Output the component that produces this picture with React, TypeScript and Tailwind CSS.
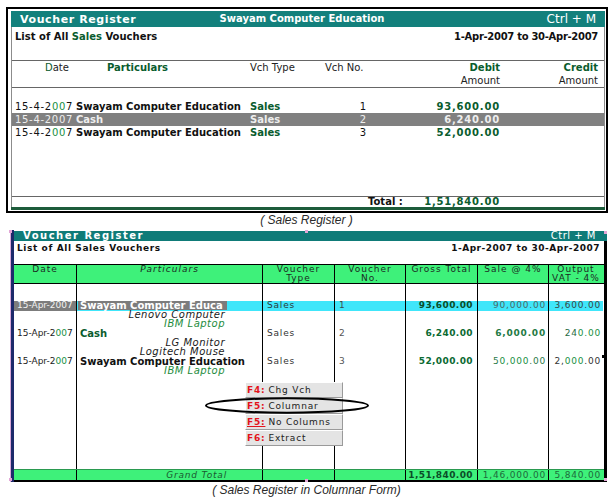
import type { ReactNode } from 'react'

const topCols = 'grid grid-cols-[64px_174px_70px_50px_130px_98px]'
const botCols = 'grid grid-cols-[63px_186px_72px_71px_72px_71px_54px]'

const green = 'text-[#0a5c2e]'

// per-column padding / alignment for the columnar table
const colCls = [
  'pl-[3px]',
  'pl-[3px]',
  'pl-[4px]',
  'pl-[4px]',
  'text-right pr-[4px]',
  'text-right pr-[2px]',
  'text-right pr-[2px]',
]

function G({ children }: { children: ReactNode }) {
  return <span className="text-[#19903f]">{children}</span>
}

function Line({
  cells,
  className = '',
  cellBg = [],
}: {
  cells: ReactNode[]
  className?: string
  cellBg?: string[]
}) {
  return (
    <div className={`${botCols} text-[9px] ${className}`}>
      {cells.map((c, i) => (
        <div
          key={i}
          className={`whitespace-nowrap ${colCls[i]} ${i < 6 ? 'border-r border-black' : ''} ${cellBg[i] ?? ''}`}
        >
          {c}
        </div>
      ))}
    </div>
  )
}

function SalesRegister() {
  const rows = [
    { name: 'Swayam Computer Education', no: '1', amt: '93,600.00', sel: false },
    { name: 'Cash', no: '2', amt: '6,240.00', sel: true },
    { name: 'Swayam Computer Education', no: '3', amt: '52,000.00', sel: false },
  ]
  return (
    <div className="ml-[6px] mt-[7px] h-[206px] w-[602px] border-2 border-black pb-px pl-[3px] pr-px pt-[2px]">
      <div className="flex h-full flex-col">
        <div className="grid h-[16px] grid-cols-[1fr_auto_1fr] items-center bg-[#13807c] px-[9px] text-white">
          <span className="text-[11px] font-bold leading-none tracking-[0.6px]">Voucher Register</span>
          <span className="pr-[12px] text-[10px] font-bold leading-none">Swayam Computer Education</span>
          <span className="text-right text-[12px] leading-none">Ctrl + M</span>
        </div>

        <div className="flex flex-1 flex-col border-x border-[#8c8c8c]">
          <div className="flex h-[34px] justify-between border-b border-[#666] pl-[3px] pr-[6px] pt-[3px] text-[10px] font-bold leading-[13px] text-[#111]">
            <span>
              List of All <span className={green}>Sales</span> Vouchers
            </span>
            <span className="tracking-[-0.3px]">1-Apr-2007 to 30-Apr-2007</span>
          </div>

          {/* column heads */}
          <div className={`${topCols} h-[27px] border-b border-[#666] text-[10px] leading-[13px] text-[#222]`}>
            <div className="pl-[33px]">
              <span className={green}>D</span>ate
            </div>
            <div className={`pl-[31px] font-bold ${green}`}>Particulars</div>
            <div>Vch Type</div>
            <div className="pl-[5px]">Vch No.</div>
            <div className="text-right">
              <div className={`font-bold ${green}`}>Debit</div>
              <div>Amount</div>
            </div>
            <div className="text-right">
              <div className={`font-bold ${green}`}>Credit</div>
              <div>Amount</div>
            </div>
          </div>

          <div className="h-[109px] border-b border-[#666] pt-[12px]">
            {rows.map(r => (
              <div
                key={r.no}
                className={`${topCols} h-[13px] text-[10px] leading-[13px] ${r.sel ? 'bg-[#808080] text-[#eeeeee]' : 'text-[#111]'}`}
              >
                <div className="pl-[3px] tracking-[0.7px]">
                  {r.sel ? '15-4-2007' : <>15-4-2<G>00</G>7</>}
                </div>
                <div className="whitespace-nowrap font-bold">{r.name}</div>
                <div className={`font-bold ${r.sel ? '' : green}`}>Sales</div>
                <div className="pr-[4px] text-right">{r.no}</div>
                <div className={`text-right font-bold tracking-[0.8px] ${r.sel ? '' : green}`}>{r.amt}</div>
                <div />
              </div>
            ))}
          </div>

          <div className={`${topCols} h-[10px] text-[10px] font-bold leading-[10px] text-[#111]`}>
            <div />
            <div />
            <div />
            <div />
            <div className="-ml-[2px] flex justify-between">
              <span>Total :</span>
              <span className={`tracking-[0.8px] ${green}`}>1,51,840.00</span>
            </div>
            <div />
          </div>
        </div>
        <div className="h-[3px] bg-[#1d5c3b]" />
      </div>
    </div>
  )
}

function ColumnarRegister() {
  const num = 'tracking-[0.8px]'
  const gross = 'font-bold tracking-[0.4px] text-[#0b4d28]'
  const name = 'text-[10px] font-bold'
  const item = 'italic text-[10px] tracking-[0.5px] pr-[37px]'
  const empty = ['', '', '', '', '', '', '']

  const sub = (t: ReactNode, last = false) => (
    <Line
      className={last ? 'h-[10px] leading-[9px]' : 'h-[9px] leading-[9px]'}
      cells={['', <span className={`block text-right ${item}`}>{t}</span>, '', '', '', '', '']}
    />
  )

  const date = <span className="text-[#222]">15-Apr-2<G>00</G>7</span>

  return (
    <div className="ml-[10px] mt-[3px] w-[597px] border-l border-[#d7a6d7]">
      <div className="flex h-[252px] flex-col border-l-[3px] border-[#1d2a6b] pt-px">
        <div className="flex h-[10px] items-center justify-between bg-[#0f7b78] pl-[9px] pr-[11px] text-white">
          <span className="text-[10px] font-bold leading-none tracking-[1.5px]">Voucher Register</span>
          <span className="text-[10px] leading-none tracking-[0.5px]">Ctrl + M</span>
        </div>

        <div className="flex flex-1 flex-col border-b-2 border-r-[3px] border-black">
          <div className="flex h-[23px] justify-between pl-[3px] pr-[4px] pt-[2px] text-[9px] font-bold leading-[10px] text-[#111]">
            <span className="tracking-[0.6px]">List of All Sales Vouchers</span>
            <span className="tracking-[0.5px]">1-Apr-2007 to 30-Apr-2007</span>
          </div>

          {/* header */}
          <div className={`${botCols} h-[20px] border-y border-black bg-[#3ef17a] text-center text-[9px] leading-[9px] tracking-[1px] text-[#1b2b22]`}>
            <div className="border-r border-black">Date</div>
            <div className="border-r border-black italic">Particulars</div>
            <div className="border-r border-black">
              Voucher
              <br />
              Type
            </div>
            <div className="border-r border-black">
              Voucher
              <br />
              No.
            </div>
            <div className="border-r border-black">Gross Total</div>
            <div className="border-r border-black">Sale @ 4%</div>
            <div>
              Output
              <br />
              VAT - 4%
            </div>
          </div>

          <div className="flex h-[185px] flex-col">
            <Line className="h-[17px]" cells={empty} />

            {/* voucher 1 */}
            <Line
              className="h-[9px] leading-[9px]"
              cellBg={['bg-[#7c7c7c]', 'bg-[#40e6fa]', 'bg-[#40e6fa]', 'bg-[#40e6fa]', 'bg-[#40e6fa]', 'bg-[#40e6fa]', 'bg-[#40e6fa]']}
              cells={[
                <span className="text-[#f2f2f2]">15-Apr-2007</span>,
                <span className={`-ml-[2px] inline-block h-[9px] w-[149px] bg-[#7c7c7c] pl-[2px] leading-[9px] text-white ${name}`}>Swayam Computer Educa</span>,
                <span className={`${num} text-[#2b3b3b]`}>Sales</span>,
                <span className={`${num} text-[#3b4b4b]`}>1</span>,
                <span className={gross}>93,600.00</span>,
                <span className={`${num} text-[#4a6868]`}>90,000.00</span>,
                <span className={`${num} text-[#3a4646]`}>3,600.00</span>,
              ]}
            />
            {sub('Lenovo Computer')}
            {sub(<span className="text-[#1d8c3d]">IBM Laptop</span>, true)}

            {/* voucher 2 */}
            <Line
              className="h-[9px] leading-[9px]"
              cells={[
                date,
                <span className={`${name} ${green}`}>Cash</span>,
                <span className={`${num} text-[#333]`}>Sales</span>,
                <span className={`${num} text-[#555]`}>2</span>,
                <span className={`${gross} !text-[#0a6a32]`}>6,240.00</span>,
                <span className={`${num} font-bold text-[#1f7a45]`}>6,000.00</span>,
                <span className={`${num} text-[#1f6a3f]`}>24<G>0.00</G></span>,
              ]}
            />
            {sub('LG Monitor')}
            {sub('Logitech Mouse', true)}

            {/* voucher 3 */}
            <Line
              className="h-[9px] leading-[9px]"
              cells={[
                date,
                <span className={`${name} text-[#111]`}>Swayam Computer Education</span>,
                <span className={`${num} text-[#333]`}>Sales</span>,
                <span className={`${num} text-[#555]`}>3</span>,
                <span className={`${gross} !text-[#0a6a32]`}>52,000.00</span>,
                <span className={`${num} text-[#2a7a4a]`}>5<G>0,000</G>.00</span>,
                <span className={`${num} text-[#333]`}>2,<G>000</G>.00</span>,
              ]}
            />
            {sub(<span className="text-[#1d8c3d]">IBM Laptop</span>, true)}

            <Line className="flex-1" cells={empty} />
          </div>

          <Line
            className="h-[11px] border-t border-[#2a9a50] bg-[#3ef17a] leading-[10px]"
            cells={[
              '',
              <span className="block pr-[35px] text-right italic tracking-[0.8px] text-[#1a5a30]">Grand Total</span>,
              '',
              '',
              <span className={gross}>1,51,840.00</span>,
              <span className={`${num} text-[#1d6a3a]`}>1,46,000.00</span>,
              <span className={`${num} text-[#1d6a3a]`}>5,840.00</span>,
            ]}
          />
        </div>
      </div>
    </div>
  )
}

function PopupMenu() {
  const items: [string, string, boolean][] = [
    ['F4:', 'Chg Vch', false],
    ['F5:', 'Columnar', false],
    ['F5:', 'No Columns', true],
    ['F6:', 'Extract', false],
  ]
  return (
    <div className="absolute left-[245px] top-[382px] w-[98px]">
      {items.map(([k, label, u]) => (
        <div
          key={label}
          className="flex h-[16px] items-center border border-b-[#9a9a9a] border-l-white border-r-[#9a9a9a] border-t-white bg-[#e4e4e4] pl-px text-[9px] leading-none tracking-[0.8px] text-[#222]"
        >
          <span className={`font-bold text-[#e3141b] ${u ? 'underline' : ''}`}>{k}</span>
          <span className="ml-[3px]">{label}</span>
        </div>
      ))}
    </div>
  )
}

export default function App() {
  const handle = 'absolute h-[3px] w-[3px] bg-[#e2a6d6]'
  return (
    <div className="relative h-[500px] w-[613px] overflow-hidden bg-white font-['DejaVu_Sans',sans-serif] text-[#1a1a1a]">
      <SalesRegister />
      <p className="mt-px h-[13px] text-center font-['Liberation_Sans',Arial,sans-serif] text-[12px] italic leading-[13px] text-[#2a2a2a]">
        ( Sales Register )
      </p>
      <ColumnarRegister />
      <p className="mt-px h-[14px] text-center font-['Liberation_Sans',Arial,sans-serif] text-[12px] italic leading-[14px] text-[#2a2a2a]">
        ( Sales Register in Columnar Form)
      </p>

      <PopupMenu />
      <svg className="absolute left-[204px] top-[396px]" width="166" height="19" viewBox="0 0 166 19">
        <ellipse cx="83" cy="9.5" rx="81" ry="7.2" fill="none" stroke="#000" strokeWidth="2" />
      </svg>

      {/* selection handles */}
      <div className={`${handle} left-[9px] top-[230px]`} />
      <div className={`${handle} left-[305px] top-[230px]`} />
      <div className={`${handle} left-[604px] top-[231px]`} />
      <div className={`${handle} left-[9px] top-[478px]`} />
      <div className={`${handle} left-[305px] top-[479px]`} />
      <div className={`${handle} left-[604px] top-[478px]`} />
      <div className="absolute left-[602px] top-[355px] h-[3px] w-[3px] bg-black" />
    </div>
  )
}
